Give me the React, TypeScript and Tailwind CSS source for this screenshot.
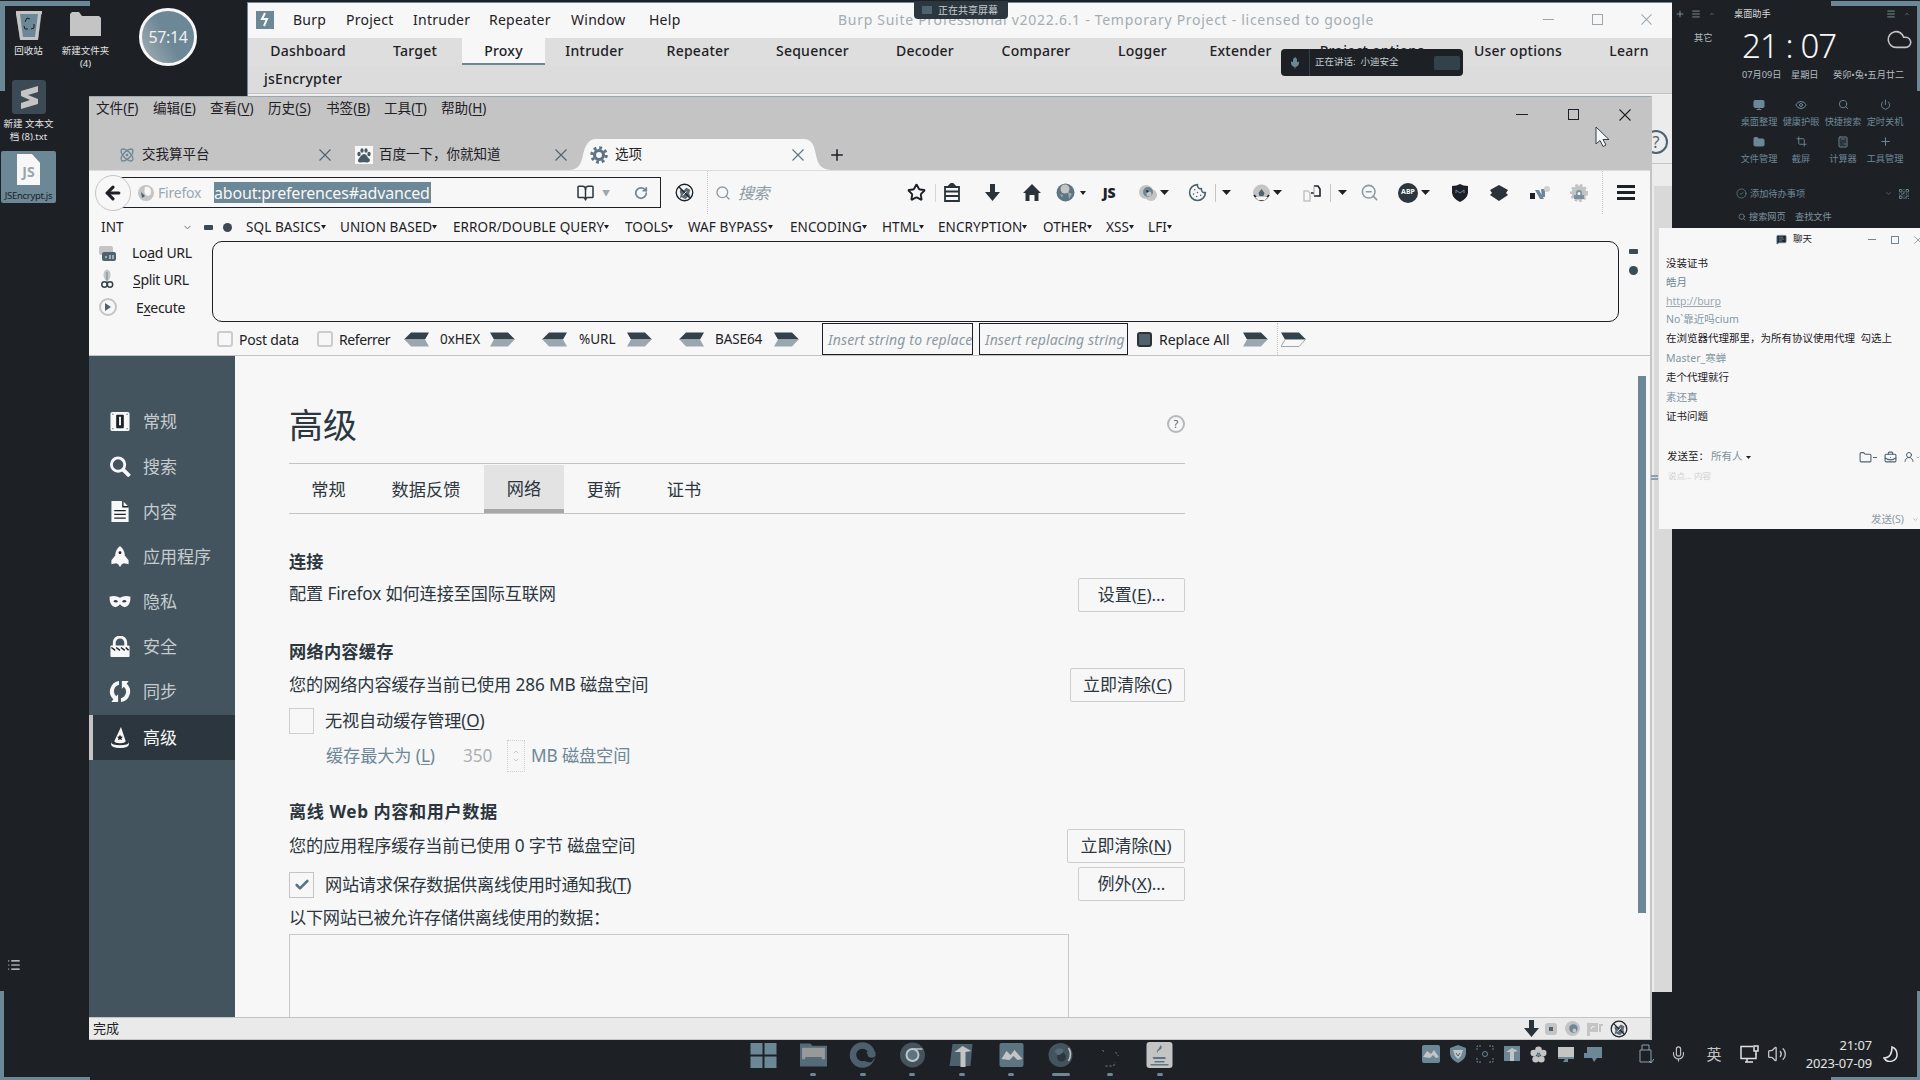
import React from 'react';
import {
  ArrowLeft, Atom, BookOpen, BriefcaseBusiness, Calculator, Check, ChevronDown, ChevronUp, CircleCheck, Cloud, Cookie, Crop, Eye,
  Folder, List, Menu, Mic, Monitor, Moon, Plus, Power, QrCode, RotateCw, Search, Star,
  UserRound, Volume2, ZoomOut, Flower, MessageSquareText,
} from 'lucide-react';

type Kids = { children?: React.ReactNode };
const Cell = ({ w, c = '', children }: Kids & { w: string; c?: string }) => (
  <div className={`flex h-full shrink-0 items-center whitespace-nowrap ${w} ${c}`}>{children}</div>
);
const Mid = ({ w, c = '', children }: Kids & { w: string; c?: string }) => (
  <div className={`flex h-full shrink-0 items-center justify-center whitespace-nowrap ${w} ${c}`}>{children}</div>
);
const Line = ({ h, c = '', children }: Kids & { h: string; c?: string }) => (
  <div className={`flex shrink-0 items-center whitespace-nowrap ${h} ${c}`}>{children}</div>
);
const Caret = ({ c = 'h-[5px] w-[9px]' }: { c?: string }) => (
  <svg className={`${c} shrink-0`} viewBox="0 0 9 5" preserveAspectRatio="none"><path d="M0 0h9L4.500 5z" fill="#1d2126" /></svg>
);
const U = ({ children }: Kids) => <span className="underline underline-offset-2">{children}</span>;
const CloseX = ({ c }: { c: string }) => (
  <svg className={c} viewBox="0 0 12 12" fill="none" stroke="currentColor" strokeWidth="1.100"><path d="M.5.5l11 11M11.500.5l-11 11" /></svg>
);
const Cog = ({ c }: { c: string }) => (
  <svg className={c} viewBox="0 0 20 20" fill="none" stroke="currentColor"><circle cx="10" cy="10" r="5" strokeWidth="3.500" /><circle cx="10" cy="10" r="8" strokeWidth="3.500" strokeDasharray="3.140 3.140" /></svg>
);
const DownArrow = () => (
  <svg className="h-[17px] w-[15px]" viewBox="0 0 15 17"><path d="M5 0h5v8h5l-7.500 9L0 8h5z" fill="#2a333a" /></svg>
);
const NoScript = ({ c }: { c: string }) => (
  <svg className={c} viewBox="0 0 20 20" fill="none"><path d="M5 9l1-3 3 2 3-3 4 2-1 4 1 3-3 1-2 2-4-2-2 1 1-4z" fill="#5d6b75" /><circle cx="10" cy="10" r="8.700" stroke="#1d2126" strokeWidth="1.400" /><path d="M4 4l12 12" stroke="#1d2126" strokeWidth="1.400" /><path d="M8 13l4-4" stroke="#f7f7f7" /></svg>
);

/* ---------- Desktop ---------- */
function DesktopIcons() {
  return (
    <div className="absolute left-0 top-0 w-[116px] text-[9.500px] leading-[13px] text-[#e4e4e4]">
      <div className="flex h-[74px] pt-[9px]">
        <div className="flex w-[57px] flex-col items-center">
          <svg className="h-[32px] w-[28px]" viewBox="0 0 28 32">
            <path d="M1 2h26l-4 29H5z" fill="#6c8796" /><path d="M1 2h26v3H1zM1 5h4l3 24-3 1zM23 5h3l-3 26H5v-3h15z" fill="#c4c4c4" />
            <path d="M10 13l2-4 3 1M19 15v4l-3 1M9 17l1 3h3" stroke="#1d2126" fill="none" />
          </svg>
          <span className="mt-[3px]">回收站</span>
        </div>
        <div className="flex w-[57px] flex-col items-center pt-[3px]">
          <svg className="h-[24px] w-[31px]" viewBox="0 0 31 24"><path d="M0 2l2-2h7l3 4h17l2 2v18H0z" fill="#c4c4c4" /></svg>
          <span className="mt-[8px]">新建文件夹</span>
          <span>(4)</span>
        </div>
      </div>
      <div className="flex h-[77px] w-[57px] flex-col items-center pt-[6px]">
        <svg className="h-[34px] w-[34px]" viewBox="0 0 34 34"><rect width="34" height="34" rx="3" fill="#3b4a54" /><path d="M26 6v6l-10 3 10 4v5L9 29v-6l9-3-9-4v-5z" fill="#c4c4c4" /></svg>
        <span className="mt-[3px]">新建 文本文</span>
        <span>档 (8).txt</span>
      </div>
      <div className="ml-px flex h-[52px] w-[55px] flex-col items-center rounded-[2px] bg-[#6c8796] pt-[3px]">
        <div className="flex h-[31px] w-[23px] items-center justify-center bg-[#f7f7f7] pt-1 text-[14px] font-bold text-[#9aa5ab] [clip-path:polygon(0_0,65%_0,100%_28%,100%_100%,0_100%)]">JS</div>
        <span className="mt-[4px] tracking-[-0.3px] text-[#1d2126]">JSEncrypt.js</span>
      </div>
    </div>
  );
}

/* ---------- Burp window ---------- */
const burpTabs: [string, string][] = [
  ['Dashboard', 'w-[120px]'], ['Target', 'w-[94px]'], ['Proxy', 'w-[83px]'], ['Intruder', 'w-[99px]'], ['Repeater', 'w-[108px]'],
  ['Sequencer', 'w-[121px]'], ['Decoder', 'w-[104px]'], ['Comparer', 'w-[118px]'], ['Logger', 'w-[95px]'], ['Extender', 'w-[101px]'],
  ['Project options', 'w-[162px]'], ['User options', 'w-[130px]'], ['Learn', 'w-[92px]'],
];
function Burp() {
  return (
    <div className="absolute left-[247px] top-[2px] h-[990px] w-[1425px] overflow-hidden border-l border-t border-[#6c8796] bg-[#ececec] text-[14px] tracking-[0.25px] text-[#1d2126]">
      <div className="flex h-[35px] items-center bg-[#f7f7f7] pb-[3px]">
        <Cell w="w-[45px]" c="pl-[8px] pt-[2px]">
          <svg className="h-[18px] w-[18px]" viewBox="0 0 18 18"><rect width="18" height="18" fill="#6c8796" /><path d="M9 2L6 8h5L8 15" stroke="#f7f7f7" strokeWidth="2" fill="none" /></svg>
        </Cell>
        <Cell w="w-[53px]">Burp</Cell><Cell w="w-[67px]">Project</Cell><Cell w="w-[76px]">Intruder</Cell><Cell w="w-[82px]">Repeater</Cell><Cell w="w-[78px]">Window</Cell><Cell w="w-[189px]">Help</Cell>
        <Cell w="w-[694px]" c="tracking-[0.71px] text-[#a3adb3]">Burp Suite Professional v2022.6.1 - Temporary Project - licensed to google</Cell>
        <Mid w="w-[32px]"><div className="h-px w-[11px] bg-[#9ba7ae]" /></Mid>
        <Mid w="w-[66px]"><div className="h-[11px] w-[11px] border border-[#9ba7ae]" /></Mid>
        <Mid w="w-[32px]"><CloseX c="h-[11px] w-[11px] text-[#9ba7ae]" /></Mid>
      </div>
      <div className="flex h-[27px] bg-[#dedede]">
        {burpTabs.map(([t, w]) => (
          <Mid key={t} w={w} c={t === 'Proxy' ? 'border-b-2 border-[#6c8796] bg-[#f7f7f7] font-medium' : 'pb-[2px] font-medium'}>{t}</Mid>
        ))}
      </div>
      <div className="flex h-[29px] items-center border-b border-[#c4c4c4] bg-[#dcdcdc] pb-[2px] pl-[16px] font-medium">jsEncrypter</div>
      <div className="flex h-[70px] justify-end border-b border-[#c4c4c4] pr-[4px] pt-[36px]">
        <div className="flex h-[24px] w-[24px] items-center justify-center rounded-full border-2 border-[#4f626e] text-[16px] text-[#4f626e]">?</div>
      </div>
      <div className="flex h-full justify-end pt-[22px]"><div className="h-full w-[18px] bg-[#d9d9d9]" /></div>
    </div>
  );
}

/* ---------- Firefox ---------- */
const menus: [string, string, string][] = [
  ['文件', 'F', 'w-[57px]'], ['编辑', 'E', 'w-[57px]'], ['查看', 'V', 'w-[58px]'], ['历史', 'S', 'w-[58px]'], ['书签', 'B', 'w-[58px]'], ['工具', 'T', 'w-[57px]'], ['帮助', 'H', 'w-[60px]'],
];
function TitleBar() {
  return (
    <div className="flex h-[42px] justify-between bg-[#c4c4c4] text-[13.600px]">
      <div className="flex h-[23px] pl-[7px]">
        {menus.map(([t, k, w]) => <Cell key={t} w={w}>{t}(<U>{k}</U>)</Cell>)}
      </div>
      <div className="flex h-[35px] items-center">
        <Mid w="w-[50px]"><div className="h-px w-[12px] bg-[#1d2126]" /></Mid>
        <Mid w="w-[52px]"><div className="h-[11px] w-[11px] border border-[#1d2126]" /></Mid>
        <Mid w="w-[51px]"><CloseX c="h-[12px] w-[12px]" /></Mid>
      </div>
    </div>
  );
}
function TabStrip() {
  return (
    <div className="flex h-[31px] bg-[#c4c4c4] text-[13.500px]">
      <Cell w="w-[53px]" c="pl-[30px]"><Atom className="h-[16px] w-[16px] text-[#6c8796]" /></Cell>
      <Cell w="w-[177px]">交我算平台</Cell>
      <Cell w="w-[36px]"><CloseX c="h-[12px] w-[12px] text-[#4f626e]" /></Cell>
      <Cell w="w-[24px]">
        <svg className="h-[18px] w-[18px]" viewBox="0 0 18 18"><rect width="18" height="18" fill="#f7f7f7" /><g fill="#4a5a65"><ellipse cx="4" cy="8" rx="1.700" ry="2.200" /><ellipse cx="7" cy="4.500" rx="1.600" ry="2.300" /><ellipse cx="11" cy="4.500" rx="1.600" ry="2.300" /><ellipse cx="14" cy="8" rx="1.700" ry="2.200" /><path d="M9 8c3 0 3 3 5 4.500s.5 4-2 4-4-.4-6 0-4-1.500-2.500-3.500S7 8 9 8z" /></g></svg>
      </Cell>
      <Cell w="w-[176px]">百度一下，你就知道</Cell>
      <Cell w="w-[15px]"><CloseX c="h-[12px] w-[12px] text-[#4f626e]" /></Cell>
      <div className="relative h-full w-[261px]">
        <svg className="absolute inset-0 h-full w-full" viewBox="0 0 261 31" preserveAspectRatio="none"><path d="M0 31c9-1 11-6 13-15S18 0 26 0h207c9 0 11 6 13 16s5 14 15 15z" fill="#f7f7f7" /></svg>
        <div className="relative flex h-full">
          <Cell w="w-[45px]" c="pl-[20px]"><Cog c="h-[18px] w-[18px] text-[#5d7583]" /></Cell>
          <Cell w="w-[177px]">选项</Cell>
          <Cell w="w-[20px]"><CloseX c="h-[12px] w-[12px] text-[#5d7583]" /></Cell>
        </div>
      </div>
      <Cell w="w-[30px]" c="-ml-[3px]"><Plus className="h-[18px] w-[18px]" /></Cell>
    </div>
  );
}
function Toolbar() {
  return (
    <div className="flex h-[44px] items-center border-t border-[#dcdcdc] bg-[#f7f7f7]">
      <div className="flex w-[572px] shrink-0 items-center pl-[6px]">
        <div className="z-10 -mr-[18px] flex h-[36px] w-[36px] shrink-0 items-center justify-center rounded-full border border-[#c4c4c4] bg-[#f7f7f7]"><ArrowLeft className="h-[20px] w-[20px]" strokeWidth={3.8} /></div>
        <div className="flex h-[31px] w-[548px] shrink-0 items-center border border-[#1d2126] pl-[24px]">
          <Cell w="w-[20px]"><svg className="h-[16px] w-[16px]" viewBox="0 0 16 16"><circle cx="8" cy="8" r="8" fill="#c4c4c4" /><path d="M7 2q6-1 6 5 0 3-3 4-5-1-3-9z" fill="#f7f7f7" /><path d="M3 7l4 4-3 2z" fill="#4f626e" /></svg></Cell>
          <Cell w="w-[56px]" c="text-[14px] tracking-[-0.2px] text-[#9ba7ae]">Firefox</Cell>
          <Cell w="w-[362px]"><span className="flex h-[21px] w-[217px] items-center bg-[#6c8796] text-[16px] tracking-[-0.18px] text-[#f7f7f7]">about:preferences#advanced</span></Cell>
          <Cell w="w-[26px]"><BookOpen className="h-[18px] w-[19px] text-[#2d363d]" /></Cell>
          <Cell w="w-[32px]"><span className="text-[8px] text-[#9ba7ae]">▼</span></Cell>
          <Cell w="w-[20px]"><RotateCw className="h-[14px] w-[14px] text-[#6c8796]" strokeWidth={3} /></Cell>
        </div>
      </div>
      <Mid w="w-[46px]"><NoScript c="h-[19px] w-[19px]" /></Mid>
      <Cell w="w-[8px]" c="border-l border-dotted border-[#c4c4c4]" />
      <Cell w="w-[23px]"><Search className="h-[16px] w-[16px] text-[#8b9aa3]" /></Cell>
      <Cell w="w-[164px]" c="text-[16px] italic tracking-[-0.4px] text-[#8b9aa3]">搜索</Cell>
      <Mid w="w-[28px]"><Star className="h-[19px] w-[19px]" strokeWidth={2.4} /></Mid>
      <Mid w="w-[10px]"><div className="h-[18px] w-px bg-[#d4d4d4]" /></Mid>
      <Mid w="w-[24px]"><svg className="h-[19px] w-[18px]" viewBox="0 0 18 19" fill="none" stroke="#2a333a" strokeWidth="1.800"><path d="M2 4h14v14H2zM2 8.500h14M2 13h14" /><path d="M6 3l3-3 3 3z" fill="#2a333a" /></svg></Mid>
      <Mid w="w-[56px]"><DownArrow /></Mid>
      <Mid w="w-[24px]"><svg className="h-[17px] w-[18px]" viewBox="0 0 18 17"><path d="M9 0l9 9h-2.500v8h-4v-6h-5v6h-4V9H0z" fill="#2a333a" /></svg></Mid>
      <Mid w="w-[42px]"><svg className="h-[19px] w-[19px]" viewBox="0 0 19 19"><circle cx="9.500" cy="9.500" r="9" fill="#5d7583" /><circle cx="9" cy="6" r="4.500" fill="#c4c4c4" /><path d="M12 9l4 2-3 5zM4 11l3 1-1 3z" fill="#9ba7ae" /></svg></Mid>
      <Cell w="w-[14px]" c="-ml-[6px]"><Caret c="h-[4px] w-[6px]" /></Cell>
      <Mid w="w-[30px]" c="text-[14px] font-black tracking-[-0.3px]">JS</Mid>
      <Mid w="w-[48px]"><svg className="h-[17px] w-[18px]" viewBox="0 0 18 17"><circle cx="7" cy="8" r="7" fill="#c4c4c4" /><circle cx="12" cy="11" r="6" fill="#c4c4c4" /><circle cx="9" cy="8" r="5" fill="#6c8796" /><circle cx="10" cy="10" r="2.500" fill="#c4c4c4" /><path d="M7 6l3 1-2 2z" fill="#1d2126" /></svg></Mid>
      <Cell w="w-[19px]" c="-ml-[12px]"><Caret /></Cell>
      <Mid w="w-[36px]"><Cookie className="h-[19px] w-[19px] text-[#4f626e]" /></Mid>
      <Mid w="w-[2px]" c="-ml-px"><div className="h-[18px] w-px bg-[#c4c4c4]" /></Mid>
      <Mid w="w-[20px]"><Caret /></Mid>
      <Mid w="w-[50px]"><svg className="h-[18px] w-[19px]" viewBox="0 0 19 18"><circle cx="9.500" cy="9" r="8.500" fill="#c4c4c4" /><path d="M2 11q7.500 10 15 0" stroke="#1d2126" fill="none" strokeWidth="1.500" /><path d="M3 13h13l-3 3H6z" fill="#f7f7f7" /><path d="M9.500 5l3 4-1 3h-4l-1-3z" fill="#4f626e" /></svg></Mid>
      <Cell w="w-[19px]" c="-ml-[13px]"><Caret /></Cell>
      <Mid w="w-[41px]"><svg className="h-[18px] w-[19px]" viewBox="0 0 19 18" fill="none"><path d="M1 7h4l2 2v8H1z" stroke="#c4c4c4" strokeWidth="1.500" /><path d="M11 2h4l2 3v7h-6M8 9h3" stroke="#1d2126" strokeWidth="1.600" /><path d="M11 2v10" stroke="#9ba7ae" /></svg></Mid>
      <Mid w="w-[2px]" c="-ml-[4px]"><div className="h-[18px] w-px bg-[#c4c4c4]" /></Mid>
      <Mid w="w-[22px]"><Caret /></Mid>
      <Mid w="w-[32px]"><ZoomOut className="h-[19px] w-[19px] text-[#8b9aa3]" /></Mid>
      <Mid w="w-[46px]"><div className="flex h-[20px] w-[20px] items-center justify-center rounded-full bg-[#2d363d] text-[7px] font-bold text-[#f7f7f7]">ABP</div></Mid>
      <Cell w="w-[16px]" c="-ml-[10px]"><Caret /></Cell>
      <Mid w="w-[46px]"><svg className="h-[18px] w-[16px]" viewBox="0 0 16 18"><path d="M0 2q5 0 8-2 3 2 8 2v7q-1 6-8 9-7-3-8-9z" fill="#1d2126" /><path d="M4 9V6l4 3 4-3v3" stroke="#6c8796" fill="none" /></svg></Mid>
      <Mid w="w-[32px]"><svg className="h-[16px] w-[18px]" viewBox="0 0 18 16"><path d="M9 0l9 5-2 3 2 2-9 6-9-6 2-2-2-3z" fill="#2a333a" /></svg></Mid>
      <Mid w="w-[50px]"><svg className="h-[14px] w-[20px]" viewBox="0 0 20 14"><path d="M0 7h5v6H0z" fill="#1d2126" /><path d="M5 4h4l5 9h-4zM11 3h4v8h-3z" fill="#6c8796" /><circle cx="17" cy="3" r="3" fill="#d0d0d0" /></svg></Mid>
      <Mid w="w-[28px]"><svg className="h-[18px] w-[18px]" viewBox="0 0 18 18"><circle cx="9" cy="9" r="7.500" fill="#c4c4c4" stroke="#c4c4c4" strokeWidth="3" strokeDasharray="2.500 2" /><path d="M6 9a3 3 0 016 0v2h2v4H4v-4h2z" fill="#7b919e" /><circle cx="9" cy="9.500" r="1.500" fill="#f7f7f7" /></svg></Mid>
      <Cell w="w-[15px]" c="ml-[9px] border-l border-dotted border-[#c4c4c4]" />
      <div className="flex w-[18px] shrink-0 flex-col gap-[3px]"><i className="h-[3px] bg-[#1d2126]" /><i className="h-[3px] bg-[#1d2126]" /><i className="h-[3px] bg-[#1d2126]" /></div>
    </div>
  );
}
const hacks: [string, string][] = [
  ['SQL BASICS', 'w-[94px]'], ['UNION BASED', 'w-[113px]'], ['ERROR/DOUBLE QUERY', 'w-[172px]'], ['TOOLS', 'w-[63px]'], ['WAF BYPASS', 'w-[102px]'], ['ENCODING', 'w-[92px]'],
  ['HTML', 'w-[56px]'], ['ENCRYPTION', 'w-[105px]'], ['OTHER', 'w-[63px]'], ['XSS', 'w-[42px]'], ['LFI', 'w-[40px]'],
];
const Arrow = ({ flip = false, hollow = false }: { flip?: boolean; hollow?: boolean }) => (
  <svg className={flip ? 'h-[15px] w-[25px] -scale-x-100' : 'h-[15px] w-[25px]'} viewBox="0 0 25 15">
    <path d="M0 .5h18l7 7H4z" fill="#33414a" /><path d="M4 7.500h20.500l-6.500 7H0z" fill={hollow ? '#f7f7f7' : '#9ba7ae'} stroke={hollow ? '#9ba7ae' : 'none'} />
  </svg>
);
const Minus = () => <div className="h-[5px] w-[9px] rounded-[1px] bg-[#3b4a54]" />;
const Dot = () => <div className="h-[9px] w-[9px] rounded-full bg-[#3b4a54]" />;
const Box = () => <div className="h-[16px] w-[16px] rounded-[3px] border-2 border-[#cccccc]" />;
function HackBar() {
  return (
    <div className="flex h-[142px] flex-col border-b border-[#c4c4c4] bg-[#f7f7f7] text-[13.500px] tracking-[-0.4px]">
      <div className="flex h-[26px] pl-[12px] tracking-[0.1px]">
        <Cell w="w-[81px]">INT</Cell>
        <Cell w="w-[22px]"><ChevronDown className="h-[11px] w-[11px] text-[#4f626e]" /></Cell>
        <Cell w="w-[19px]"><Minus /></Cell>
        <Cell w="w-[23px]"><Dot /></Cell>
        {hacks.map(([t, w]) => <Cell key={t} w={w}>{t}<Caret c="h-[4px] w-[5px]" /></Cell>)}
      </div>
      <div className="flex h-[82px]">
        <div className="flex w-[123px] shrink-0 flex-col pl-[10px] text-[14px] tracking-[-0.3px]">
          <div className="flex h-[25px] items-center"><Cell w="w-[33px]"><svg className="h-[16px] w-[18px]" viewBox="0 0 18 16"><rect x="0" y="1" width="14" height="9" rx="2" fill="#c4c4c4" /><rect x="3" y="7" width="14" height="9" rx="2" fill="#4f626e" /><path d="M7 13v-2M11 10v4M14 10v4" stroke="#f7f7f7" /></svg></Cell><span>Lo<U>a</U>d URL</span></div>
          <div className="flex h-[28px] items-center"><Cell w="w-[33px]"><svg className="h-[20px] w-[16px]" viewBox="0 0 16 20" fill="none"><ellipse cx="8" cy="6" rx="3.500" ry="5.500" fill="#c4c4c4" /><circle cx="5.500" cy="15.500" r="2.700" stroke="#33414a" strokeWidth="1.500" /><circle cx="11" cy="15.500" r="2.700" stroke="#33414a" strokeWidth="1.500" /><path d="M8 3v10" stroke="#6c8796" /></svg></Cell><span className="pl-px"><U>S</U>plit URL</span></div>
          <div className="flex h-[28px] items-center"><Cell w="w-[33px]"><div className="flex h-[18px] w-[18px] items-center justify-center rounded-full border-2 border-[#c4c4c4]"><svg className="h-[8px] w-[6px]" viewBox="0 0 6 8"><path d="M0 0l6 4-6 4z" fill="#4f626e" /></svg></div></Cell><span className="pl-[4px]">E<U>x</U>ecute</span></div>
        </div>
        <div className="mt-px h-[81px] w-[1407px] shrink-0 rounded-[10px] border border-[#1d2126]" />
        <div className="flex flex-1 flex-col items-center gap-[12px] pr-[3px] pt-[9px]"><Minus /><Dot /></div>
      </div>
      <div className="flex h-[33px] items-center pl-[128px] pt-px">
        <Cell w="w-[22px]"><Box /></Cell>
        <Cell w="w-[78px]" c="text-[14px] tracking-[-0.2px]">Post data</Cell>
        <Cell w="w-[22px]"><Box /></Cell>
        <Cell w="w-[65px]" c="text-[14px]">Referrer</Cell>
        <Cell w="w-[36px]"><Arrow flip /></Cell><Cell w="w-[50px]" c="tracking-[0px]">0xHEX</Cell><Cell w="w-[52px]"><Arrow /></Cell>
        <Cell w="w-[37px]"><Arrow flip /></Cell><Cell w="w-[48px]" c="tracking-[0px]">%URL</Cell><Cell w="w-[52px]"><Arrow /></Cell>
        <Cell w="w-[36px]"><Arrow flip /></Cell><Cell w="w-[59px]" c="tracking-[-0.1px]">BASE64</Cell><Cell w="w-[48px]"><Arrow /></Cell>
        <div className="flex h-[32px] w-[151px] shrink-0 items-center overflow-hidden whitespace-nowrap border border-[#1d2126] pl-[5px] text-[14px] italic tracking-[0.15px] text-[#8b9aa3]">Insert string to replace</div>
        <div className="ml-[6px] flex h-[32px] w-[149px] shrink-0 items-center overflow-hidden whitespace-nowrap border border-[#1d2126] pl-[5px] text-[14px] italic tracking-[0.1px] text-[#8b9aa3]">Insert replacing string</div>
        <Cell w="w-[31px]" c="pl-[9px]"><div className="h-[15px] w-[15px] rounded-[3px] border-2 border-[#2a333a] bg-[#4f626e]" /></Cell>
        <Cell w="w-[84px]" c="text-[14px] tracking-[-0.05px]">Replace All</Cell>
        <Cell w="w-[34px]"><Arrow /></Cell>
        <Cell w="w-[4px]" c="border-l border-dotted border-[#c4c4c4]" />
        <Arrow hollow />
      </div>
    </div>
  );
}

const ic = 'h-[21px] w-[22px]';
const side: [string, React.ReactNode][] = [
  ['常规', <svg className={ic} viewBox="0 0 22 22"><rect x="1" y="1" width="20" height="20" rx="2" fill="#f7f7f7" /><rect x="7" y="4" width="8" height="14" rx="1" fill="#1d2126" /><rect x="10" y="6" width="2" height="9" fill="#f7f7f7" /><path d="M3 3h1v1H3zM18 3h1v1h-1zM3 18h1v1H3zM18 18h1v1h-1z" fill="#1d2126" /></svg>],
  ['搜索', <svg className={ic} viewBox="0 0 22 22" fill="none" stroke="#f7f7f7"><circle cx="9" cy="9" r="7" strokeWidth="3" /><path d="M14 14l7 7" strokeWidth="4" /></svg>],
  ['内容', <svg className={ic} viewBox="0 0 22 22"><path d="M2 0h12l6 6v16H2z" fill="#f7f7f7" /><path d="M14 0v6h6M5 10h12M5 14h12M5 18h12" stroke="#1d2126" strokeWidth="1.400" fill="none" /></svg>],
  ['应用程序', <svg className={ic} viewBox="0 0 22 22"><path d="M11 0q5 4 5 10l4 5v4l-5-1-2 1-2 3-2-3-2-1-5 1v-4l4-5q0-6 5-10z" fill="#f7f7f7" /><circle cx="11" cy="7" r="1.500" fill="#1d2126" /></svg>],
  ['隐私', <svg className={ic} viewBox="0 0 22 22"><path d="M0 6q6-2 11 1 5-3 11-1 0 10-6 11-3 0-5-3-2 3-5 3Q0 16 0 6z" fill="#f7f7f7" /><path d="M4 11q2-3 5 0-2 2-5 0zM13 11q3-3 5 0-3 2-5 0z" fill="#33414a" /></svg>],
  ['安全', <svg className={ic} viewBox="0 0 22 22"><path d="M5 11V7a6 6 0 0112 0v4" fill="none" stroke="#f7f7f7" strokeWidth="3" /><rect x="1" y="10" width="20" height="12" rx="1" fill="#f7f7f7" /><path d="M2 12l4 3M7 12l4 3M12 12l4 3M17 12l3 3" stroke="#1d2126" strokeWidth="1.500" /></svg>],
  ['同步', <svg className={ic} viewBox="0 0 22 22"><path d="M10 0v4a7 7 0 00-3 12l2-2v8H2l2-3A11 11 0 0110 0zM12 22v-4a7 7 0 003-12l-2 2V0h7l-2 3a11 11 0 01-6 19z" fill="#f7f7f7" /></svg>],
  ['高级', <svg className={ic} viewBox="0 0 22 22"><path d="M12 0l5 15q-1 2-6 2t-6-2z" fill="#f7f7f7" /><path d="M3 14q-4 5 8 5t8-5q5 8-8 8T3 14z" fill="#f7f7f7" /><path d="M11 8l1 2 2 .3-1.500 1.500.5 2-2-1-2 1 .5-2L8 10.300l2-.3z" fill="#1d2126" /></svg>],
];
const Btn = ({ w, children }: Kids & { w: string }) => (
  <div className={`flex h-[34px] shrink-0 items-center justify-center rounded-[2px] border border-[#cdcdcd] text-[17px] tracking-[0px] ${w}`}><span>{children}</span></div>
);
const prefTabs: [string, string][] = [['常规', 'w-[79px]'], ['数据反馈', 'w-[116px]'], ['网络', 'w-[80px]'], ['更新', 'w-[80px]'], ['证书', 'w-[80px]']];
function Preferences() {
  return (
    <div className="flex h-[661px] bg-[#f7f7f7]">
      <div className="w-[146px] shrink-0 bg-[#44545e] pt-[43px]">
        {side.map(([t, i]) => (
          <div key={t} className={t === '高级' ? 'mt-px flex h-[45px] items-center border-l-4 border-[#c4c4c4] bg-[#2c363e] pl-[16px] text-[17px] text-[#f7f7f7]' : 'flex h-[45px] items-center pl-[20px] text-[17px] text-[#c4ccd0]'}>
            {i}<span className="pl-[12px]">{t}</span>
          </div>
        ))}
      </div>
      <div className="ml-[54px] flex w-[896px] shrink-0 flex-col overflow-hidden text-[17.200px] text-[#2c363e]">
        <div className="flex h-[108px] shrink-0 items-center justify-between border-b border-[#c4c4c4] pt-[32px]">
          <h1 className="text-[34px] font-normal">高级</h1>
          <div className="mb-[3px] flex h-[18px] w-[18px] items-center justify-center rounded-full border-2 border-[#b4b9bc] text-[11px] text-[#4f626e]">?</div>
        </div>
        <div className="flex h-[50px] shrink-0 border-b border-[#c4c4c4] pt-px">
          {prefTabs.map(([t, w]) => <Mid key={t} w={w} c={t === '网络' ? 'border-b-4 border-[#a5a7a8] bg-[#e3e3e3] pt-[4px]' : 'pt-px'}>{t}</Mid>)}
        </div>
        <Line h="h-[26px]" c="mt-[35px] pb-px font-bold">连接</Line>
        <Line h="h-[34px]" c="mt-[3px] justify-between"><span className="pb-[3px] tracking-[-0.15px]">配置 Firefox 如何连接至国际互联网</span><Btn w="w-[107px]">设置(<U>E</U>)...</Btn></Line>
        <Line h="h-[26px]" c="mt-[26px] pt-px font-bold tracking-[0.25px]">网络内容缓存</Line>
        <Line h="h-[34px]" c="mt-[4px] justify-between"><span className="tracking-[-0.1px]">您的网络内容缓存当前已使用 286 MB 磁盘空间</span><Btn w="w-[115px]">立即清除(<U>C</U>)</Btn></Line>
        <Line h="h-[30px]" c="mt-[4px] tracking-[-0.15px]"><div className="mr-[11px] h-[26px] w-[25px] border border-[#cfcfcf]" />无视自动缓存管理(<U>O</U>)</Line>
        <Line h="h-[34px]" c="mt-[3px] pl-[37px] tracking-[-0.1px] text-[#6c8796]"><Cell w="w-[137px]">缓存最大为 (<U>L</U>)</Cell><Cell w="w-[44px]" c="text-[#adb1b4]">350</Cell><div className="mr-[6px] flex h-[32px] w-[18px] flex-col items-center justify-center border border-dotted border-[#cfcfcf] text-[#adb1b4]"><ChevronUp className="h-[8px] w-[8px]" /><ChevronDown className="h-[8px] w-[8px]" /></div>MB 磁盘空间</Line>
        <Line h="h-[26px]" c="mt-[26px] font-bold tracking-[0.55px]">离线 Web 内容和用户数据</Line>
        <Line h="h-[34px]" c="mt-[4px] justify-between"><span className="tracking-[-0.15px]">您的应用程序缓存当前已使用 0 字节 磁盘空间</span><Btn w="w-[118px]">立即清除(<U>N</U>)</Btn></Line>
        <Line h="h-[34px]" c="mt-[4px] justify-between tracking-[-0.3px]"><div className="flex items-center pt-px"><div className="mr-[11px] flex h-[26px] w-[25px] items-center justify-center border border-[#c4c4c4]"><Check className="h-[16px] w-[16px] text-[#5d7583]" strokeWidth={4} /></div>网站请求保存数据供离线使用时通知我(<U>T</U>)</div><Btn w="w-[107px]">例外(<U>X</U>)...</Btn></Line>
        <Line h="h-[26px]" c="mt-[4px] tracking-[-0.3px]">以下网站已被允许存储供离线使用的数据：</Line>
        <div className="mt-[3px] h-[90px] w-[780px] shrink-0 border border-[#c9c9c9]" />
      </div>
      <div className="ml-auto w-[12px] pt-[20px]"><div className="h-[537px] w-[8px] bg-[#6c8796]" /></div>
    </div>
  );
}
function StatusBar() {
  return (
    <div className="flex h-[23px] items-center justify-between border-y border-[#c4c4c4] bg-[#eaeaea] pl-[4px] text-[13px]">
      <span>完成</span>
      <div className="flex h-full">
        <Mid w="w-[20px]"><DownArrow /></Mid>
        <Mid w="w-[20px]"><div className="flex h-[12px] w-[12px] items-center justify-center rounded-[3px] bg-[#c4c4c4]"><i className="h-[4px] w-[4px] bg-[#4f626e]" /></div></Mid>
        <Mid w="w-[22px]"><svg className="h-[15px] w-[15px]" viewBox="0 0 16 16"><circle cx="8" cy="8" r="8" fill="#c4c4c4" /><circle cx="9" cy="8" r="4.500" fill="#6c8796" /><circle cx="10" cy="10" r="2" fill="#c4c4c4" /></svg></Mid>
        <Mid w="w-[23px]"><svg className="h-[14px] w-[16px]" viewBox="0 0 16 14"><path d="M0 1h11v9H3v4H0zM12 2h4v2h-2v6h-2z" fill="#c4c4c4" /><path d="M4 7q1-4 4-2" stroke="#f7f7f7" fill="none" /></svg></Mid>
        <Mid w="w-[26px]"><NoScript c="h-[18px] w-[18px]" /></Mid>
        <div className="w-[18px]" />
      </div>
    </div>
  );
}

/* ---------- Desktop assistant ---------- */
const tools: [string, React.ReactNode][] = [
  ['桌面整理', <Monitor className="h-[12px] w-[12px]" fill="#6c8796" />], ['健康护眼', <Eye className="h-[12px] w-[12px]" />], ['快捷搜索', <Search className="h-[11px] w-[11px]" />], ['定时关机', <Power className="h-[11px] w-[11px]" />],
  ['文件管理', <Folder className="h-[12px] w-[12px]" fill="#6c8796" />], ['截屏', <Crop className="h-[11px] w-[11px]" />], ['计算器', <Calculator className="h-[12px] w-[12px]" />], ['工具管理', <Plus className="h-[13px] w-[13px]" />],
];
function Assistant() {
  return (
    <div className="absolute left-[1672px] top-0 flex h-[228px] w-[248px] flex-col text-[9.200px] text-[#8ba0ac]">
      <div className="flex h-[28px] items-center pl-[3px]">
        <Cell w="w-[16px]"><Plus className="h-[10px] w-[10px]" /></Cell><Cell w="w-[18px]"><Menu className="h-[10px] w-[10px]" /></Cell><Cell w="w-[25px]"><ChevronUp className="h-[6px] w-[6px]" /></Cell>
        <Cell w="w-[152px]" c="text-[#d8d8d8]">桌面助手</Cell>
        <Cell w="w-[18px]"><Menu className="h-[10px] w-[10px]" /></Cell><ChevronUp className="h-[6px] w-[6px]" />
      </div>
      <div className="flex h-[36px] pl-[22px]">
        <Cell w="w-[48px]" c="pb-[16px] text-[#b4bcc0]">其它</Cell>
        <Cell w="w-[144px]" c="text-[33px] font-light tracking-[-0.9px] text-[#f7f7f7]">21 : 07</Cell>
        <Cloud className="-mt-px h-[27px] w-[27px] text-[#c4c4c4]" strokeWidth={1.4} />
      </div>
      <div className="flex h-[24px] items-center pl-[70px] text-[#b4bcc0]"><Cell w="w-[49px]">07月09日</Cell><Cell w="w-[42px]">星期日</Cell>癸卯•兔•五月廿二</div>
      <div className="mt-[10px] grid grid-cols-4 pl-[66px] pr-[14px]">
        {tools.map(([t, i]) => (
          <div key={t} className="flex h-[37px] flex-col items-center text-[#6c8796]">
            <div className="flex h-[16px] items-center">{i}</div><span className="mt-[2px] whitespace-nowrap leading-[13px]">{t}</span>
          </div>
        ))}
      </div>
      <div className="mt-[11px] flex h-[24px] items-center pl-[64px] text-[#6c8796]"><Cell w="w-[14px]"><CircleCheck className="h-[11px] w-[11px]" strokeWidth={1.5} /></Cell><Cell w="w-[135px]">添加待办事项</Cell><Cell w="w-[13px]"><ChevronDown className="h-[7px] w-[7px]" /></Cell><QrCode className="h-[12px] w-[12px]" /></div>
      <div className="flex h-[23px] items-center pl-[66px] text-[#7d94a1]"><Cell w="w-[11px]"><Search className="h-[8px] w-[8px]" /></Cell><Cell w="w-[46px]">搜索网页</Cell>查找文件</div>
    </div>
  );
}

/* ---------- Chat ---------- */
const chat: [string, string, string][] = [
  ['没装证书', 'h-[19px]', 'text-[#1d2126]'], ['皓月', 'h-[20px]', 'text-[#6c8796]'], ['http://burp', 'h-[18px]', 'text-[#9ba7ae] underline'], ['No`靠近吗cium', 'h-[18px]', 'text-[#8297a3]'],
  ['在浏览器代理那里，为所有协议使用代理  勾选上', 'h-[20px]', 'text-[#1d2126]'], ['Master_寒蝉', 'h-[19px]', 'text-[#8297a3]'], ['走个代理就行', 'h-[20px]', 'text-[#1d2126]'],
  ['素还真', 'h-[19px]', 'text-[#7d94a1]'], ['证书问题', 'h-[20px]', 'text-[#1d2126]'],
];
function Chat() {
  return (
    <div className="absolute left-[1659px] top-[228px] flex h-[301px] w-[261px] flex-col overflow-hidden bg-[#f7f7f7] text-[10.500px] text-[#1d2126]">
      <div className="flex h-[23px] shrink-0 items-center pl-[117px]">
        <Cell w="w-[17px]"><MessageSquareText className="h-[11px] w-[11px]" fill="#1d2126" stroke="#6c8796" /></Cell><Cell w="w-[75px]" c="text-[9.500px]">聊天</Cell>
        <Cell w="w-[23px]"><div className="h-px w-[8px] bg-[#6c8796]" /></Cell><Cell w="w-[23px]"><div className="h-[8px] w-[8px] border border-[#6c8796]" /></Cell><CloseX c="h-[8px] w-[8px] shrink-0 text-[#6c8796]" />
      </div>
      <div className="flex h-[195px] shrink-0 flex-col pl-[7px] pt-[3px]">
        {chat.map(([t, h, c]) => <div key={t} className={`flex shrink-0 items-center ${h} ${c}`}><span className="whitespace-pre">{t}</span></div>)}
      </div>
      <div className="flex h-[22px] shrink-0 items-center pl-[8px]">
        <Cell w="w-[44px]">发送至：</Cell><Cell w="w-[148px]" c="text-[#7d94a1]">所有人<Caret c="ml-[3px] h-[3px] w-[5px]" /></Cell>
        <Cell w="w-[14px]"><Folder className="h-[13px] w-[13px] text-[#4f626e]" /></Cell><Cell w="w-[11px]"><div className="h-px w-[4px] bg-[#4f626e]" /></Cell><Cell w="w-[19px]"><BriefcaseBusiness className="h-[13px] w-[13px] text-[#4f626e]" /></Cell><Cell w="w-[13px]"><UserRound className="h-[12px] w-[12px] text-[#4f626e]" /></Cell><ChevronDown className="h-[5px] w-[5px]" />
      </div>
      <div className="flex h-[16px] shrink-0 items-center pl-[9px] text-[8.500px] text-[#d0d0d0]">说点... 内容</div>
      <div className="mt-auto flex h-[17px] shrink-0 items-start justify-end gap-[8px] pr-px leading-[14px] text-[#8b9aa3]"><span>发送(S)</span><ChevronDown className="mt-[4px] h-[7px] w-[7px]" /></div>
    </div>
  );
}

/* ---------- Taskbar ---------- */
const s26 = 'h-[26px] w-[27px]';
const apps: React.ReactNode[] = [
  <svg className={s26} viewBox="0 0 26 26"><path d="M0 1h12v11.500H0zM14 1h12v11.500H14zM0 14.500h12V26H0zM14 14.500h12V26H14z" fill="#6c8796" /></svg>,
  <svg className={s26} viewBox="0 0 26 24"><path d="M0 1h10l2 2h14v20H0z" fill="#566b78" /><path d="M2 5h22v11h-3v-2H5v2H2z" fill="#98999b" /></svg>,
  <svg className={s26} viewBox="0 0 26 26"><circle cx="13" cy="13" r="9.500" fill="none" stroke="#4c606d" strokeWidth="6.500" /><path d="M13 14l4-4 9 3v2l-4 5q-9 1-9-6z" fill="#1d2126" /><path d="M17 10h9v4q-2 3-7 1z" fill="#4c606d" /></svg>,
  <svg className={s26} viewBox="0 0 26 26"><circle cx="13" cy="13" r="12.500" fill="#43545f" /><circle cx="13" cy="13" r="6" fill="#5d7583" stroke="#c4c4c4" strokeWidth="2" /><path d="M14 7h9" stroke="#c4c4c4" strokeWidth="1.500" /></svg>,
  <svg className={s26} viewBox="0 0 26 26"><path d="M4 2h20l-2 22H1z" fill="#4c606d" /><path d="M14 4l9 5-6 1v15h-5V10H6z" fill="#c4c4c4" /></svg>,
  <svg className={s26} viewBox="0 0 26 26"><rect x="1" y="1" width="24" height="24" rx="2" fill="#5d7583" /><path d="M3 17l5-8 4 4 4-5 8 9-5 1-4-4-4 4z" fill="#c4c4c4" /></svg>,
  <svg className={s26} viewBox="0 0 26 26"><circle cx="13" cy="13" r="12" fill="#43545f" /><circle cx="14" cy="15" r="4.500" fill="#2c363e" /><path d="M21 6q4 6 0 13" stroke="#c4c4c4" fill="none" strokeWidth="1.500" /><path d="M7 9q4-5 9-1-1 5-6 5z" fill="#566b78" /></svg>,
  <svg className={s26} viewBox="0 0 26 26" stroke="#6c8796" strokeDasharray="2 2"><path d="M5 8l2 3M18 10l3 4M8 24h8l2-4" fill="none" /></svg>,
  <svg className={s26} viewBox="0 0 26 26"><rect width="26" height="26" rx="3" fill="#c4c4c4" /><path d="M14 3q3 3-1 5t0 5q-4-3-2-5t3-5zM6 15h13v2H7zM8 19h10v1.500H8zM4 22h18v1.500H4z" fill="#5d7583" /></svg>,
];
const tray = 'h-[18px] w-[18px]';
function Taskbar() {
  return (
    <div className="absolute bottom-0 left-0 flex h-[40px] w-[1920px] items-start">
      <div className="ml-[739px] flex w-[671px]">
        {apps.map((a, i) => (
          <div key={i} className="flex h-[38px] w-[49.500px] shrink-0 flex-col items-center pt-[2px]">
            {a}
            <div className={i === 0 ? 'hidden' : i === 6 ? 'mt-[5px] h-[3px] w-[18px] rounded-full bg-[#6c8796]' : 'mt-[5px] h-[3px] w-[6px] rounded-full bg-[#6c8796]'} />
          </div>
        ))}
      </div>
      <div className="flex h-[28px] items-center text-[#c4c4c4]">
        <Mid w="w-[27px]" c="ml-[7px]"><svg className={tray} viewBox="0 0 18 18"><rect width="18" height="18" rx="2" fill="#6c8796" /><path d="M1 12l4-6 4 3 3-4 5 7-3 1-3-3-3 3z" fill="#c4c4c4" /></svg></Mid>
        <Mid w="w-[27px]"><svg className={tray} viewBox="0 0 18 18"><path d="M9 0l8 3v6q-1 6-8 9-7-3-8-9V3z" fill="#6c8796" /><path d="M4 5h10l-2 6-3 3-3-3z" fill="#c4c4c4" /><path d="M7 8l2 3 2-3" stroke="#4f626e" fill="none" /></svg></Mid>
        <Mid w="w-[27px]"><svg className={tray} viewBox="0 0 18 18" fill="none" stroke="#6c8796"><circle cx="9" cy="9" r="2.500" /><path d="M1 5V1h4M13 1h4v4M17 13v4h-4M5 17H1v-4" strokeDasharray="2 1" /></svg></Mid>
        <Mid w="w-[27px]"><svg className={tray} viewBox="0 0 18 18"><path d="M1 1h16v15H1z" fill="#6c8796" /><path d="M9 3l6 3-4 1v9H7V7H3z" fill="#c4c4c4" /></svg></Mid>
        <Mid w="w-[27px]"><svg className="h-[17px] w-[17px]" viewBox="0 0 18 18"><g fill="#c4c4c4"><circle cx="9" cy="4" r="3.500" /><circle cx="14" cy="7.500" r="3.500" /><circle cx="12" cy="14" r="3.500" /><circle cx="6" cy="14" r="3.500" /><circle cx="4" cy="7.500" r="3.500" /></g><circle cx="9" cy="9.500" r="2" fill="#6c8796" /></svg></Mid>
        <Mid w="w-[27px]"><svg className={tray} viewBox="0 0 18 18"><path d="M1 2h16v10H1z" fill="#c4c4c4" /><path d="M1 12h16v2H1zM8 14h3v3H6z" fill="#6c8796" /></svg></Mid>
        <Mid w="w-[28px]"><svg className={tray} viewBox="0 0 18 18"><path d="M3 2h15v11h-5l-3 4-2-4H0V8h3z" fill="#6c8796" /></svg></Mid>
        <Mid w="w-[34px]" c="ml-[22px]"><svg className="h-[20px] w-[15px]" viewBox="0 0 15 20" fill="none" stroke="#8ba0ac"><path d="M3 6V1h7v5M1 6h11v12H1z" /><path d="M10 17l2 2 3-4" /></svg></Mid>
        <Mid w="w-[30px]"><Mic className="h-[18px] w-[17px]" strokeWidth={1.6} /></Mid>
        <Mid w="w-[42px]" c="text-[15px]">英</Mid>
        <Mid w="w-[29px]"><svg className="h-[18px] w-[19px]" viewBox="0 0 19 18" fill="none" stroke="#e0e0e0" strokeWidth="1.500"><path d="M13 1.500H1v12h15V9M5 17h8M7 14v3" /><path d="M14 1h4v5h-4zM16 6v4" /></svg></Mid>
        <Mid w="w-[26px]"><Volume2 className="h-[20px] w-[20px]" strokeWidth={1.6} /></Mid>
        <div className="flex w-[82px] flex-col items-end text-[12.900px] leading-[18px] tracking-[-0.1px] text-[#e4e4e4]"><span>21:07</span><span>2023-07-09</span></div>
        <Mid w="w-[36px]"><svg className="h-[16px] w-[15px]" viewBox="0 0 15 16" fill="none" stroke="#e4e4e4" strokeWidth="1.500"><path d="M9 1q5 2 5 7a7 7 0 01-13 4q8 0 8-11z" /></svg></Mid>
      </div>
    </div>
  );
}

/* ---------- Share frame and floating chips ---------- */
function Overlays() {
  return (
    <>
      <div className="absolute left-0 top-[1px] h-[90px] w-[90px] border-l-[5px] border-t-[5px] border-[#6c8796]" />
      <div className="absolute right-0 top-[1px] h-[90px] w-[89px] border-r-[3px] border-t-[5px] border-[#6c8796]" />
      <div className="absolute bottom-0 left-0 h-[89px] w-[90px] border-b-[3px] border-l-[4px] border-[#6c8796]" />
      <div className="absolute bottom-0 right-0 h-[89px] w-[89px] border-b-[3px] border-r-[3px] border-[#6c8796]" />
      <div className="absolute left-[139px] top-[8px] flex h-[58px] w-[58px] items-center justify-center rounded-full border-[3px] border-[#f7f7f7] bg-[linear-gradient(60deg,#9ba7ae_10%,#6c8796_50%)] text-[16px] tracking-[-0.4px] text-[#f0f0f0]">57:14</div>
      <List className="absolute left-[7px] top-[958px] h-[14px] w-[14px] text-[#e4e4e4]" strokeWidth={2} />
      <div className="absolute left-[914px] top-[1px] flex h-[18px] w-[94px] items-center gap-[6px] rounded-b-[4px] bg-[#2c363e] pl-[8px] text-[10px] text-[#c4ccd0]"><i className="h-[8px] w-[10px] bg-[#4f626e]" />正在共享屏幕</div>
      <div className="absolute left-[1281px] top-[49px] flex h-[27px] w-[182px] items-center rounded-[4px] bg-[#1d2126] text-[9.500px] text-[#c4ccd0]">
        <Mid w="w-[28px]"><Mic className="h-[12px] w-[12px] text-[#6c8796]" fill="#6c8796" /></Mid>
        <Cell w="w-[125px]" c="border-l border-[#33414a] pl-[5px]">正在讲话:&nbsp; 小迪安全</Cell>
        <div className="h-[14px] w-[26px] rounded-[2px] bg-[#33414a]" />
      </div>
      <svg className="absolute left-[1595px] top-[126px] h-[22px] w-[15px]" viewBox="0 0 15 22"><path d="M1 1v17l4-3.500L8 20.500l3-1.500-3-5.500h6z" fill="#f7f7f7" stroke="#33414a" /></svg>
      <div className="absolute left-[1651px] top-[475px] h-[5px] w-[7px] border-y-2 border-[#8ba0ac]" />
    </>
  );
}

export default function App() {
  return (
    <div className="relative h-[1080px] w-[1920px] overflow-hidden bg-[#1d2126] font-['Noto_Sans','Noto_Sans_CJK_SC',sans-serif]">
      <DesktopIcons />
      <Burp />
      <div className="absolute left-[89px] top-[96px] h-[944px] w-[1563px] overflow-hidden border-r-2 border-t border-r-[#c4c4c4] border-t-[#9ba7ae] bg-[#f7f7f7] text-[#1d2126]">
        <TitleBar /><TabStrip /><Toolbar /><HackBar /><Preferences /><StatusBar />
      </div>
      <Assistant />
      <Chat />
      <Taskbar />
      <Overlays />
    </div>
  );
}
